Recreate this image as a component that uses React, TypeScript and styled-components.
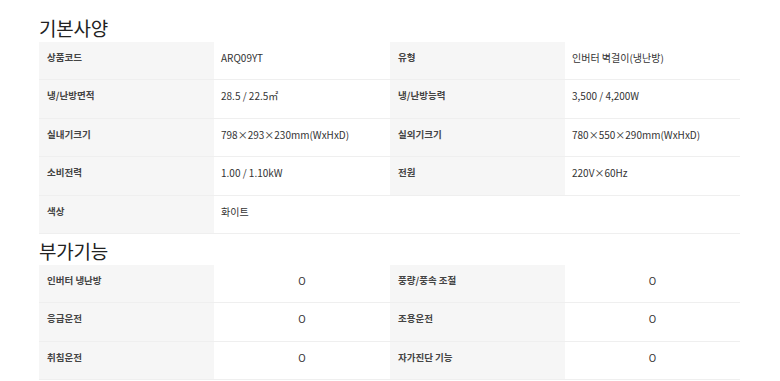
import React from 'react'
import styled, { createGlobalStyle } from 'styled-components'

const GlobalStyle = createGlobalStyle`
  html, body {
    margin: 0;
    padding: 0;
    background: #fff;
  }
  body {
    font-family: 'Noto Sans CJK KR', 'Noto Sans', sans-serif;
    color: #333;
  }
`

const Page = styled.div`
  width: 780px;
  height: 381px;
  overflow: hidden;
  padding: 14px 40px 0 39px;
  box-sizing: border-box;
`

const Section = styled.section<{ $gap?: number }>`
  margin-top: ${({ $gap }) => $gap ?? 0}px;
`

const Heading = styled.h2`
  margin: 0;
  font-size: 19px;
  line-height: 28px;
  font-weight: 400;
  color: #222;
  letter-spacing: -0.2px;
`

const Table = styled.div`
  display: grid;
  grid-template-columns: 175px 176px 175px 175px;
  grid-auto-rows: 38.4px;
  width: 701px;
`

const Label = styled.div`
  background: #f6f6f6;
  border-bottom: 1px solid #efefef;
  box-sizing: border-box;
  padding: 8px 8px 0;
  font-size: 9.5px;
  line-height: 14px;
  font-weight: 700;
  color: #444;
`

const Value = styled.div<{ $center?: boolean; $span?: number }>`
  background: #fff;
  border-bottom: 1px solid #efefef;
  box-sizing: border-box;
  padding: 9px 7px 0;
  font-size: 10px;
  line-height: 14px;
  color: #333;
  text-align: ${({ $center }) => ($center ? 'center' : 'left')};
  grid-column: ${({ $span }) => ($span ? `span ${$span}` : 'auto')};
`

type Spec = [string, string]

const basicRows: Spec[][] = [
  [
    ['상품코드', 'ARQ09YT'],
    ['유형', '인버터 벽걸이(냉난방)'],
  ],
  [
    ['냉/난방면적', '28.5 / 22.5㎡'],
    ['냉/난방능력', '3,500 / 4,200W'],
  ],
  [
    ['실내기크기', '798×293×230mm(WxHxD)'],
    ['실외기크기', '780×550×290mm(WxHxD)'],
  ],
  [
    ['소비전력', '1.00 / 1.10kW'],
    ['전원', '220V×60Hz'],
  ],
  [['색상', '화이트']],
]

const featureRows: Spec[][] = [
  [
    ['인버터 냉난방', 'O'],
    ['풍량/풍속 조절', 'O'],
  ],
  [
    ['응급운전', 'O'],
    ['조용운전', 'O'],
  ],
  [
    ['취침운전', 'O'],
    ['자가진단 기능', 'O'],
  ],
]

const SpecTable = ({ rows, center }: { rows: Spec[][]; center?: boolean }) => (
  <Table>
    {rows.map((row) =>
      row.map(([label, value], i) => (
        <React.Fragment key={label}>
          <Label>{label}</Label>
          <Value $center={center} $span={row.length === 1 && i === 0 ? 3 : undefined}>
            {value}
          </Value>
        </React.Fragment>
      ))
    )}
  </Table>
)

export default function App() {
  return (
    <>
      <GlobalStyle />
      <Page>
        <Section>
          <Heading>기본사양</Heading>
          <SpecTable rows={basicRows} />
        </Section>
        <Section $gap={3}>
          <Heading>부가기능</Heading>
          <SpecTable rows={featureRows} center />
        </Section>
      </Page>
    </>
  )
}
